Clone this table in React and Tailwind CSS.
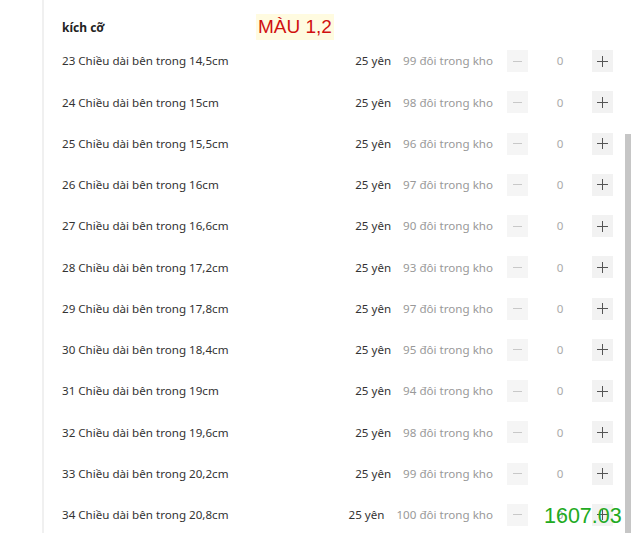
const sizes = [
  ["23", "14,5", 99],
  ["24", "15", 98],
  ["25", "15,5", 96],
  ["26", "16", 97],
  ["27", "16,6", 90],
  ["28", "17,2", 93],
  ["29", "17,8", 97],
  ["30", "18,4", 95],
  ["31", "19", 94],
  ["32", "19,6", 98],
  ["33", "20,2", 99],
  ["34", "20,8", 100],
];

function SizeRow({ num, len, stock }) {
  return (
    <div className="h-[41.27px] flex items-center text-[11.6px] text-[#333]">
      <div className="flex-1">
        {num} Chiều dài bên trong {len}cm
      </div>
      <div className="flex items-center gap-3">
        <span>25 yên</span>
        <span className="text-[#999]">{stock} đôi trong kho</span>
      </div>
      <div className="ml-[14px] w-[21px] h-[22px] bg-[#f5f5f5] flex items-center justify-center">
        <div className="w-[9px] h-px bg-[#c8c8c8]" />
      </div>
      <div className="w-[64px] text-center text-[#aaa]">0</div>
      <div className="w-[21px] h-[22px] bg-[#f2f2f2] flex items-center justify-center relative">
        <div className="w-[11px] h-px bg-[#555]" />
        <div className="absolute w-px h-[11px] bg-[#555]" />
      </div>
    </div>
  );
}

export default function App() {
  return (
    <div
      className="relative w-[631px] h-[533px] overflow-hidden bg-white"
      style={{ fontFamily: '"Noto Sans", "Open Sans", sans-serif' }}
    >
      <div className="ml-[42px] h-full border-l-2 border-[#f0f0f0] pl-[18px] pr-[18px] pt-[16px]">
        <div className="h-[24.4px] flex items-center text-[12px] font-bold text-[#222]">
          kích cỡ
        </div>
        {sizes.map(([num, len, stock]) => (
          <SizeRow key={num} num={num} len={len} stock={stock} />
        ))}
      </div>

      <div
        className="absolute left-[256px] top-[14px] px-[2px] bg-[#fffbe0] text-[#d01010] text-[19px] leading-[26px]"
        style={{ fontFamily: '"Liberation Sans", Arial, sans-serif' }}
      >
        MÀU 1,2
      </div>

      <div
        className="absolute left-[544px] top-[503px] text-[#22aa22] text-[21.5px] leading-[26px]"
        style={{ fontFamily: '"Liberation Sans", Arial, sans-serif' }}
      >
        1607.03
      </div>

      <div className="absolute right-0 top-[134px] bottom-0 w-[6px] bg-[#c6c6c6]" />
    </div>
  );
}
